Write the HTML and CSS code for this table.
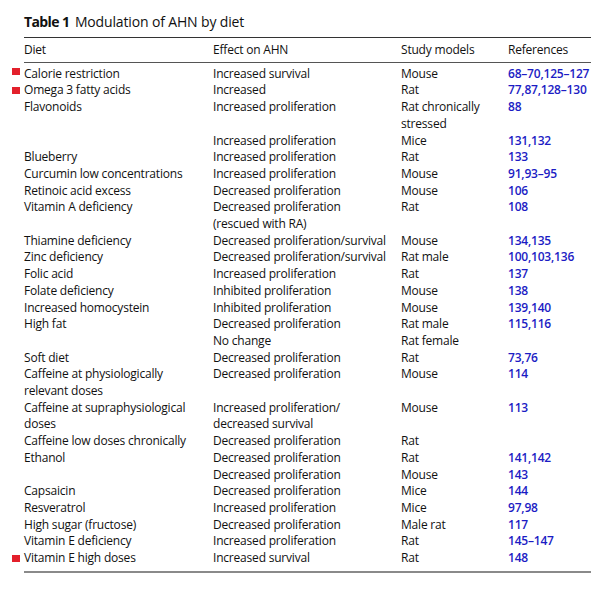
FILE: index.html
```html
<!DOCTYPE html>
<html>
<head>
<meta charset="utf-8">
<link rel="stylesheet" href="styles.css">
</head>
<body>
<div class="page">
  <h1 class="caption"><b>Table 1</b> Modulation of AHN by diet</h1>
  <table class="tbl">
    <colgroup>
      <col class="c1"><col class="c2"><col class="c3"><col class="c4">
    </colgroup>
    <thead>
      <tr><th>Diet</th><th>Effect on AHN</th><th>Study models</th><th>References</th></tr>
    </thead>
    <tbody>
      <tr class="first"><td class="mark">Calorie restriction</td><td>Increased survival</td><td>Mouse</td><td class="ref">68–70,125–127</td></tr>
      <tr><td class="mark">Omega 3 fatty acids</td><td>Increased</td><td>Rat</td><td class="ref">77,87,128–130</td></tr>
      <tr><td>Flavonoids</td><td>Increased proliferation</td><td>Rat chronically<br>stressed</td><td class="ref">88</td></tr>
      <tr><td></td><td>Increased proliferation</td><td>Mice</td><td class="ref">131,132</td></tr>
      <tr><td>Blueberry</td><td>Increased proliferation</td><td>Rat</td><td class="ref">133</td></tr>
      <tr><td>Curcumin low concentrations</td><td>Increased proliferation</td><td>Mouse</td><td class="ref">91,93–95</td></tr>
      <tr><td>Retinoic acid excess</td><td>Decreased proliferation</td><td>Mouse</td><td class="ref">106</td></tr>
      <tr><td>Vitamin A deficiency</td><td>Decreased proliferation<br>(rescued with RA)</td><td>Rat</td><td class="ref">108</td></tr>
      <tr><td>Thiamine deficiency</td><td>Decreased proliferation/survival</td><td>Mouse</td><td class="ref">134,135</td></tr>
      <tr><td>Zinc deficiency</td><td>Decreased proliferation/survival</td><td>Rat male</td><td class="ref">100,103,136</td></tr>
      <tr><td>Folic acid</td><td>Increased proliferation</td><td>Rat</td><td class="ref">137</td></tr>
      <tr><td>Folate deficiency</td><td>Inhibited proliferation</td><td>Mouse</td><td class="ref">138</td></tr>
      <tr><td>Increased homocystein</td><td>Inhibited proliferation</td><td>Mouse</td><td class="ref">139,140</td></tr>
      <tr><td>High fat</td><td>Decreased proliferation</td><td>Rat male</td><td class="ref">115,116</td></tr>
      <tr><td></td><td>No change</td><td>Rat female</td><td class="ref"></td></tr>
      <tr><td>Soft diet</td><td>Decreased proliferation</td><td>Rat</td><td class="ref">73,76</td></tr>
      <tr><td>Caffeine at physiologically<br>relevant doses</td><td>Decreased proliferation</td><td>Mouse</td><td class="ref">114</td></tr>
      <tr><td>Caffeine at supraphysiological<br>doses</td><td>Increased proliferation/<br>decreased survival</td><td>Mouse</td><td class="ref">113</td></tr>
      <tr><td>Caffeine low doses chronically</td><td>Decreased proliferation</td><td>Rat</td><td class="ref"></td></tr>
      <tr><td>Ethanol</td><td>Decreased proliferation</td><td>Rat</td><td class="ref">141,142</td></tr>
      <tr><td></td><td>Decreased proliferation</td><td>Mouse</td><td class="ref">143</td></tr>
      <tr><td>Capsaicin</td><td>Decreased proliferation</td><td>Mice</td><td class="ref">144</td></tr>
      <tr><td>Resveratrol</td><td>Increased proliferation</td><td>Mice</td><td class="ref">97,98</td></tr>
      <tr><td>High sugar (fructose)</td><td>Decreased proliferation</td><td>Male rat</td><td class="ref">117</td></tr>
      <tr><td>Vitamin E deficiency</td><td>Increased proliferation</td><td>Rat</td><td class="ref">145–147</td></tr>
      <tr class="last"><td class="mark">Vitamin E high doses</td><td>Increased survival</td><td>Rat</td><td class="ref">148</td></tr>
    </tbody>
  </table>
</div>
</body>
</html>
```

FILE: styles.css
```css
html, body {
  margin: 0;
  padding: 0;
  background: #ffffff;
}
body {
  font-family: "Open Sans", "Liberation Sans", sans-serif;
  color: #111111;
}
.page {
  padding: 12px 16px 0 24px;
}
.caption {
  margin: 0 0 5px 0;
  font-size: 14px;
  font-weight: 400;
  line-height: 20px;
  letter-spacing: -0.15px;
}
.caption b {
  font-weight: 700;
  letter-spacing: -0.6px;
  margin-right: 2px;
}
.tbl {
  width: 567px;
  border-collapse: collapse;
  table-layout: fixed;
  font-size: 12px;
  line-height: 16.7px;
  letter-spacing: -0.2px;
}
.c1 { width: 189px; }
.c2 { width: 188px; }
.c3 { width: 107px; }
.c4 { width: auto; }
.tbl thead th {
  text-align: left;
  font-weight: 400;
  padding: 4px 0 3px 0;
  border-top: 1.5px solid #333333;
  border-bottom: 1.5px solid #555555;
}
.tbl td {
  padding: 0;
  vertical-align: top;
  white-space: nowrap;
}
.tbl tr.first td {
  padding-top: 3px;
}
.tbl tr.last td {
  padding-bottom: 4px;
  border-bottom: 2px solid #8a8a8a;
}
.mark {
  position: relative;
}
.mark::before {
  content: "";
  position: absolute;
  left: -12px;
  top: 5px;
  width: 8px;
  height: 7px;
  background: #e3202b;
}
.ref {
  color: #1c1cc4;
  font-weight: 600;
}
```
